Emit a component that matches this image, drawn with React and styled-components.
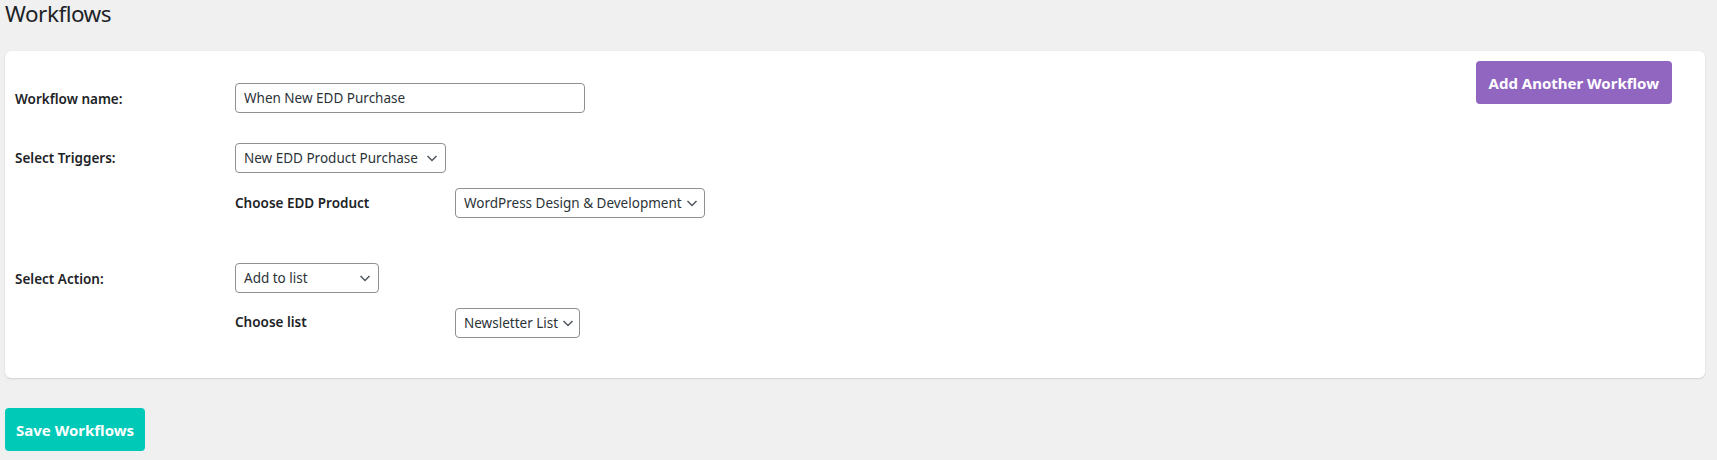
import React from "react";
import styled, { createGlobalStyle } from "styled-components";

const GlobalStyle = createGlobalStyle`
  html, body {
    margin: 0;
    padding: 0;
    background: #f0f0f1;
  }
  body {
    font-family: "Noto Sans", "Open Sans", sans-serif;
    color: #1d2327;
    font-size: 14px;
  }
`;

const Page = styled.div`
  padding: 0 12px 0 5px;
`;

const Title = styled.h1`
  margin: 0;
  padding: 0;
  font-size: 22.5px;
  letter-spacing: -0.5px;
  font-weight: 400;
  line-height: 28px;
  color: #1d2327;
`;

const Card = styled.section`
  margin-top: 23px;
  background: #fff;
  border-radius: 6px;
  box-shadow: 0 1px 2px rgba(0, 0, 0, 0.12), 0 0 1px rgba(0, 0, 0, 0.08);
  display: flex;
  align-items: flex-start;
  padding: 10px 0 25px;
`;

const Form = styled.div`
  flex: 1;
  display: flex;
  flex-direction: column;
  gap: 30px;
  padding-top: 22px;
`;

const Section = styled.div`
  display: flex;
  flex-direction: column;
  gap: 15px;
`;

const Row = styled.div`
  display: grid;
  grid-template-columns: 220px auto;
  align-items: center;
  justify-items: start;
  padding-left: 10px;
`;

const SubRow = styled.div`
  display: grid;
  grid-template-columns: 220px auto;
  align-items: center;
  justify-items: start;
  padding-left: 230px;
  padding-bottom: 15px;
`;

const Label = styled.label`
  font-size: 13.5px;
  font-weight: 600;
  color: #1d2327;
  line-height: 1.3;
  padding-top: ${(p) => p.$shift || 0}px;
`;

const TextInput = styled.input`
  box-sizing: border-box;
  width: 350px;
  height: 30px;
  padding: 0 8px;
  border: 1px solid #8c8f94;
  border-radius: 4px;
  font-family: inherit;
  font-size: 13.5px;
  color: #2c3338;
  background: #fff;
  outline: none;
`;

const SelectBox = styled.div`
  box-sizing: border-box;
  width: ${(p) => p.$w}px;
  height: 30px;
  padding: 0 7px 0 8px;
  border: 1px solid #8c8f94;
  border-radius: 4px;
  display: flex;
  align-items: center;
  justify-content: space-between;
  gap: 4px;
  font-size: 13.5px;
  color: #2c3338;
  background: #fff;
  white-space: nowrap;
  cursor: pointer;
`;

const Chevron = styled.svg`
  flex: none;
  width: 12px;
  height: 12px;
`;

const Aside = styled.div`
  flex: none;
  padding-right: 33px;
`;

const Button = styled.button`
  box-sizing: border-box;
  height: ${(p) => p.$h}px;
  padding: 0 ${(p) => p.$px}px;
  border: none;
  border-radius: 4px;
  background: ${(p) => p.$bg};
  color: #fff;
  font-family: inherit;
  font-size: 15px;
  font-weight: 700;
  cursor: pointer;
`;

const Footer = styled.div`
  padding: 30px 0 0 0;
`;

function Select({ value, width }) {
  return (
    <SelectBox $w={width}>
      <span>{value}</span>
      <Chevron viewBox="0 0 12 12" aria-hidden="true">
        <polyline
          points="1.5,4 6,8.5 10.5,4"
          fill="none"
          stroke="#50575e"
          strokeWidth="1.5"
        />
      </Chevron>
    </SelectBox>
  );
}

export default function App() {
  return (
    <>
      <GlobalStyle />
      <Page>
        <Title>Workflows</Title>
        <Card>
          <Form>
            <Row>
              <Label $shift={4}>Workflow name:</Label>
              <TextInput defaultValue="When New EDD Purchase" />
            </Row>
            <Section>
              <Row>
                <Label $shift={2}>Select Triggers:</Label>
                <Select value="New EDD Product Purchase" width={211} />
              </Row>
              <SubRow>
                <Label $shift={1}>Choose EDD Product</Label>
                <Select value="WordPress Design & Development" width={250} />
              </SubRow>
            </Section>
            <Section>
              <Row>
                <Label $shift={4}>Select Action:</Label>
                <Select value="Add to list" width={144} />
              </Row>
              <SubRow>
                <Label>Choose list</Label>
                <Select value="Newsletter List" width={125} />
              </SubRow>
            </Section>
          </Form>
          <Aside>
            <Button $bg="#9166c1" $h={43} $px={13}>
              Add Another Workflow
            </Button>
          </Aside>
        </Card>
        <Footer>
          <Button $bg="#00c9b7" $h={43} $px={11}>
            Save Workflows
          </Button>
        </Footer>
      </Page>
    </>
  );
}
